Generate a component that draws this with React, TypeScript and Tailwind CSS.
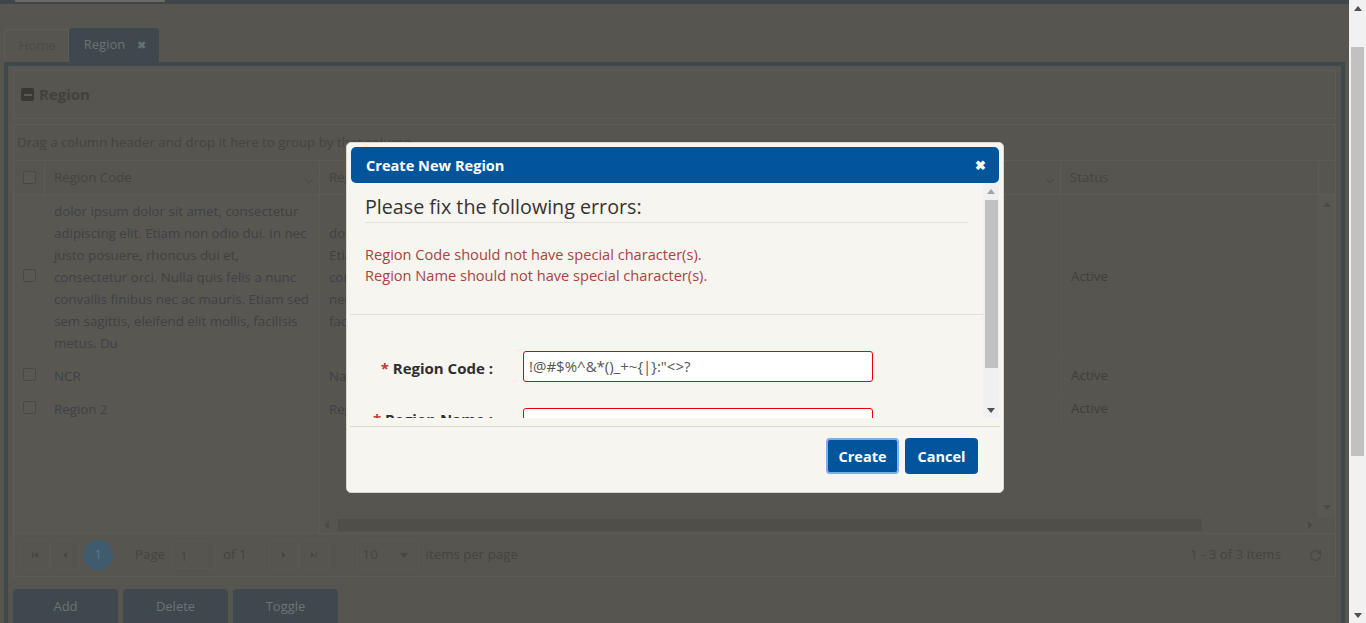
import { RotateCw } from "lucide-react"

const codeLines = [
  "dolor ipsum dolor sit amet, consectetur",
  "adipiscing elit. Etiam non odio dui. In nec",
  "justo posuere, rhoncus dui et,",
  "consectetur orci. Nulla quis felis a nunc",
  "convallis finibus nec ac mauris. Etiam sed",
  "sem sagittis, eleifend elit mollis, facilisis",
  "metus. Du",
]

const nameLines = [
  "dolor ipsum dolor sit amet, consectetur adipiscing elit. Etiam non odio dui. In nec justo posuere,",
  "Etiam non odio dui. In nec justo posuere, rhoncus dui et, consectetur orci. Nulla quis felis",
  "convallis finibus nec ac mauris. Etiam sed sem sagittis, eleifend elit mollis, facilisis metus.",
  "nec ac mauris. Etiam sed sem sagittis, eleifend elit mollis, facilisis metus. Du",
  "facilisis metus. Du",
]

const rows = [
  { code: codeLines, name: nameLines, status: "Active", h: "h-[165px]" },
  { code: ["NCR"], name: ["National Capital Region"], status: "Active", h: "h-[33px]" },
  { code: ["Region 2"], name: ["Region 2"], status: "Active", h: "h-[33px]" },
]

function Check() {
  return <span className="block h-[13px] w-[13px] rounded-[2px] border border-[#4a4945] bg-[#5a5853]" />
}

function Chevron() {
  return (
    <svg width="10" height="6" viewBox="0 0 10 6" className="mt-[6px]">
      <path d="M1 1l4 4 4-4" fill="none" stroke="#47463f" strokeWidth="1" />
    </svg>
  )
}

function Tri({ dir, color = "#4b4a46", size = 8 }: { dir: "up" | "down" | "left" | "right"; color?: string; size?: number }) {
  const d = {
    up: "M0 6h8L4 1z",
    down: "M0 2h8L4 7z",
    left: "M6 0v8L1 4z",
    right: "M2 0v8l5-4z",
  }[dir]
  return (
    <svg width={size} height={size} viewBox="0 0 8 8">
      <path d={d} fill={color} />
    </svg>
  )
}

function PagerIcon({ kind }: { kind: "first" | "prev" | "next" | "last" }) {
  return (
    <span className="flex h-[30px] w-[30px] items-center justify-center rounded-[3px] border border-[#5a5853]">
      <svg width="8" height="8" viewBox="0 0 8 8">
        {kind === "first" && <path d="M1 1h1.2v6H1zM7 1v6L3 4z" fill="#47463f" />}
        {kind === "prev" && <path d="M6 1v6L2 4z" fill="#47463f" />}
        {kind === "next" && <path d="M2 1v6l4-3z" fill="#47463f" />}
        {kind === "last" && <path d="M1 1v6l4-3zM5.8 1H7v6H5.8z" fill="#47463f" />}
      </svg>
    </span>
  )
}

export default function App() {
  return (
    <div className="flex h-[623px] w-full overflow-hidden bg-[#575550] font-['Open_Sans','Liberation_Sans',sans-serif] text-[13.3px] text-[#3f3e3b]">
      <div className="relative flex min-w-0 flex-1 flex-col">
        {/* top bar */}
        <div className="h-[4px] shrink-0 bg-[#3e464b]">
          <div className="ml-[15px] h-[2px] w-[150px] bg-[#6b6964]" />
        </div>

        {/* tabs */}
        <div className="mt-[24px] flex h-[34px] shrink-0 items-end pl-[4px] text-[13px]">
          <div className="flex h-[33px] items-center rounded-t-[3px] border border-b-0 border-[#5e5c57] pl-[14px] pr-[12px] text-[#4a4945]">
            Home
          </div>
          <div className="flex h-[34px] items-center gap-[12px] rounded-t-[4px] bg-[#3f484d] pl-[15px] pr-[13px] text-[#6b7276]">
            Region
            <span className="text-[11px]">✖</span>
          </div>
        </div>

        {/* panel */}
        <div className="ml-[4px] mr-[4px] flex min-h-0 flex-1 flex-col border-l-4 border-r-4 border-t-4 border-[#3f484d] pl-[5px] pr-[5px] pt-[4px]">
          <div className="flex h-[49px] shrink-0 items-center gap-[5px] border border-[#5d5b56] pl-[7px]">
            <span className="flex h-[13px] w-[13px] items-center justify-center rounded-[2px] bg-[#393835]">
              <span className="h-[2px] w-[8px] bg-[#5c5a55]" />
            </span>
            <span className="text-[15px] font-bold text-[#42413d]">Region</span>
          </div>

          {/* grid */}
          <div className="mt-[5px] flex shrink-0 flex-col border border-[#5d5b56]">
            <div className="flex h-[36px] items-center border-b border-[#5d5b56] pl-[3px] text-[#45443f]">
              Drag a column header and drop it here to group by that column
            </div>
            <div className="flex h-[34px] border-b border-[#5d5b56] text-[#45443f]">
              <div className="flex w-[30px] shrink-0 items-center justify-center">
                <Check />
              </div>
              <div className="flex w-[275px] shrink-0 items-center justify-between border-l border-[#5d5b56] pl-[9px] pr-[5px]">
                Region Code <Chevron />
              </div>
              <div className="flex w-[741px] shrink-0 items-center justify-between border-l border-[#5d5b56] pl-[9px] pr-[5px]">
                Region Name <Chevron />
              </div>
              <div className="flex flex-1 items-center border-l border-[#5d5b56] pl-[9px]">Status</div>
              <div className="w-[17px] shrink-0 border-l border-[#5d5b56]" />
            </div>

            <div className="flex h-[338px]">
              {/* locked columns */}
              <div className="flex w-[306px] shrink-0 flex-col border-r border-[#5d5b56] bg-[#595752]">
                {rows.map((r, i) => (
                  <div key={i} className={`flex ${r.h} shrink-0 border-b border-[#595752]`}>
                    <div className="flex w-[30px] shrink-0 items-center justify-center pb-[3px]">
                      <Check />
                    </div>
                    <div className="flex w-[275px] shrink-0 flex-col justify-center border-l border-[#5a5853] pl-[9px] pr-[6px] leading-[22px] text-[#3e4245]">
                      {r.code.map((l) => (
                        <div key={l} className="whitespace-nowrap">{l}</div>
                      ))}
                    </div>
                  </div>
                ))}
              </div>

              {/* scrollable columns */}
              <div className="flex min-w-0 flex-1 flex-col">
                <div className="flex min-h-0 flex-1">
                  <div className="flex min-w-0 flex-1 flex-col overflow-hidden">
                    {rows.map((r, i) => (
                      <div key={i} className={`flex ${r.h} shrink-0 border-b border-[#595752]`}>
                        <div className="flex w-[741px] shrink-0 flex-col justify-center overflow-hidden pl-[9px] leading-[22px] text-[#3e4245]">
                          {r.name.map((l) => (
                            <div key={l} className="whitespace-nowrap">{l}</div>
                          ))}
                        </div>
                        <div className="flex flex-1 items-center border-l border-[#5a5853] pl-[9px] text-[#3f3e3b]">
                          {r.status}
                        </div>
                      </div>
                    ))}
                  </div>
                  <div className="flex w-[17px] shrink-0 flex-col items-center justify-between bg-[#5a5853] py-[6px]">
                    <Tri dir="up" />
                    <Tri dir="down" />
                  </div>
                </div>
                <div className="flex h-[16px] shrink-0 items-center bg-[#565550] pr-[17px]">
                  <span className="ml-[3px]"><Tri dir="left" /></span>
                  <div className="ml-[7px] h-[12px] w-[864px] bg-[#4f4e4a]" />
                  <span className="ml-auto mr-[4px]"><Tri dir="right" /></span>
                </div>
              </div>
            </div>

            {/* pager */}
            <div className="flex h-[43px] items-center border-t border-[#5d5b56] pl-[6px] pr-[8px] text-[#45443f]">
              <PagerIcon kind="first" />
              <PagerIcon kind="prev" />
              <span className="ml-[3px] flex h-[30px] w-[30px] items-center justify-center rounded-full bg-[#3f5b6d] text-[#5f7480]">1</span>
              <span className="ml-[22px]">Page</span>
              <span className="ml-[6px] flex h-[28px] w-[45px] items-center rounded-[3px] border border-[#5a5853] pl-[8px] pt-[3px]">1</span>
              <span className="ml-[7px]">of 1</span>
              <span className="ml-[22px] flex"><PagerIcon kind="next" /><PagerIcon kind="last" /></span>
              <span className="ml-[28px] flex h-[30px] w-[62px] items-center justify-between rounded-[3px] border border-[#5a5853] pl-[5px] pr-[10px]">
                10 <Tri dir="down" color="#47463f" />
              </span>
              <span className="ml-[7px]">items per page</span>
              <span className="ml-auto">1 - 3 of 3 items</span>
              <span className="ml-[22px] flex w-[24px] justify-center">
                <RotateCw size={13} color="#47463f" strokeWidth={2} />
              </span>
            </div>
          </div>

          {/* action buttons */}
          <div className="mt-[12px] flex gap-[5px] text-[13px]">
            {["Add", "Delete", "Toggle"].map((b) => (
              <div key={b} className="flex h-[36px] w-[105px] items-center justify-center rounded-t-[4px] bg-[#3f484d] text-[#6b7377]">
                {b}
              </div>
            ))}
          </div>
        </div>

        {/* modal */}
        <div className="absolute left-[346px] top-[142px] flex h-[351px] w-[658px] flex-col rounded-[5px] border border-[#dcd8c6] bg-[#f6f5f0] p-[4px] text-[14px]">
          <div className="flex h-[36px] shrink-0 items-center justify-between rounded-[5px] bg-[#02559a] pl-[15px] pr-[13px] pt-[1px] text-[14.6px] font-bold text-white">
            Create New Region
            <span className="text-[13px]">✖</span>
          </div>
          <div className="-ml-[1px] flex h-[235px] shrink-0">
            <div className="min-w-0 flex-1 overflow-hidden">
              <div className="px-[15px] pt-[10px]">
                <div className="border-b border-[#e2e0da] pb-[2px] text-[19.7px] leading-[27px] text-[#333]">
                  Please fix the following errors:
                </div>
                <div className="mt-[21px] text-[14.6px] leading-[21px] text-[#a8443e]">
                  <div>Region Code should not have special character(s).</div>
                  <div>Region Name should not have special character(s).</div>
                </div>
              </div>
              <div className="mt-[28px] border-t border-[#e2e0da]" />
              <div className="mt-[36px] flex items-center">
                <div className="w-[143px] shrink-0 pt-[3px] text-right text-[15px] font-bold text-[#2f2f2f]">
                  <span className="text-[#c0392b]">*</span> Region Code :
                </div>
                <div className="ml-[30px] flex h-[31px] w-[350px] items-center rounded-[3px] border border-[#e60000] bg-white pl-[5px] text-[15px] text-[#555]">
                  !@#$%^&amp;*()_+~{"{|}"}:"&lt;&gt;?
                </div>
              </div>
              <div className="mt-[26px] flex items-start">
                <div className="w-[143px] shrink-0 text-right text-[15px] font-bold text-[#2f2f2f]">
                  <span className="text-[#c0392b]">*</span> Region Name :
                </div>
                <div className="ml-[30px] h-[31px] w-[350px] rounded-[3px] border border-[#e60000] bg-white" />
              </div>
            </div>
            <div className="flex w-[16px] shrink-0 flex-col items-center bg-[#f0f0f0]">
              <span className="flex h-[17px] items-center"><Tri dir="up" color="#a3a3a3" /></span>
              <div className="h-[168px] w-[13px] bg-[#c1c1c1]" />
              <span className="mt-auto flex h-[17px] items-center"><Tri dir="down" color="#505050" /></span>
            </div>
          </div>
          <div className="-mx-[1px] mt-[8px] flex flex-1 items-start justify-end gap-[6px] border-t border-[#dcd8c6] pr-[22px] pt-[11px]">
            <button className="h-[36px] w-[73px] rounded-[4px] border-2 border-[#7eaee6] bg-[#02559a] pt-[1px] text-[14.5px] font-bold text-white">
              Create
            </button>
            <button className="h-[36px] w-[73px] rounded-[4px] bg-[#02559a] pt-[1px] text-[14.5px] font-bold text-white">
              Cancel
            </button>
          </div>
        </div>
      </div>

      {/* page scrollbar */}
      <div className="flex w-[17px] shrink-0 flex-col items-center bg-[#f1f1f1]">
        <span className="flex h-[17px] items-center"><Tri dir="up" color="#505050" /></span>
        <div className="mt-[30px] h-[409px] w-[13px] bg-[#c1c1c1]" />
        <span className="mt-auto flex h-[17px] items-center"><Tri dir="down" color="#505050" /></span>
      </div>
    </div>
  )
}
